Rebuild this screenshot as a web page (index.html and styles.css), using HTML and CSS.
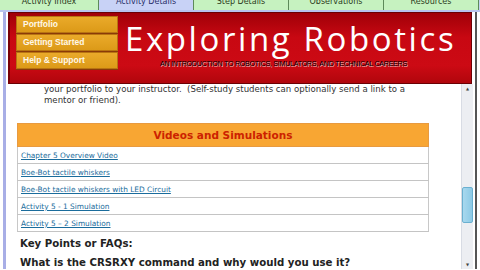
FILE: index.html
```html
<!DOCTYPE html>
<html lang="en">
<head>
    <meta charset="UTF-8">
    <title>Exploring Robotics - Activity Details</title>
    <link rel="stylesheet" href="styles.css">
</head>
<body>

<!-- Вкладки -->
<div class="tabs">
    <div class="tab-link"><span>Activity Index</span></div>
    <div class="tab-link active"><span>Activity Details</span></div>
    <div class="tab-link"><span>Step Details</span></div>
    <div class="tab-link"><span>Observations</span></div>
    <div class="tab-link"><span>Resources</span></div>
</div>

<div class="frame">
    <div class="banner">
        <div class="menu">
            <div class="menu-item">Portfolio</div>
            <div class="menu-item">Getting Started</div>
            <div class="menu-item">Help &amp; Support</div>
        </div>
        <div class="title">
            <div class="big">Exploring Robotics</div>
            <div class="sub">AN INTRODUCTION TO ROBOTICS, SIMULATORS, AND TECHNICAL CAREERS</div>
        </div>
    </div>

    <div class="view">
        <div class="content">
            <p class="intro">your portfolio to your instructor.&nbsp; (Self-study students can optionally send a link to a<br>mentor or friend).</p>

            <table class="videos">
                <tr><th>Videos and Simulations</th></tr>
                <tr><td><a href="#">Chapter 5 Overview Video</a></td></tr>
                <tr><td><a href="#">Boe-Bot tactile whiskers</a></td></tr>
                <tr><td><a href="#">Boe-Bot tactile whiskers with LED Circuit</a></td></tr>
                <tr><td><a href="#">Activity 5 - 1 Simulation</a></td></tr>
                <tr><td><a href="#">Activity 5 &ndash; 2 Simulation</a></td></tr>
            </table>

            <h3>Key Points or FAQs:</h3>
            <h3>What is the CRSRXY command and why would you use it?</h3>
        </div>
        <div class="scrollbar">
            <div class="arrow">&#9650;</div>
            <div class="track"><div class="thumb"></div></div>
            <div class="arrow">&#9660;</div>
        </div>
    </div>
</div>

</body>
</html>
```

FILE: styles.css
```css
body {
    margin: 0;
    background: #fff;
    font-family: "DejaVu Sans", Verdana, sans-serif;
    width: 480px;
    height: 270px;
    overflow: hidden;
}

/* Вкладки */
.tabs {
    display: flex;
    height: 10px;
    overflow: hidden;
    background: #c4d0f0;
    border-bottom: 2px solid #b8c4ee;
}
.tab-link {
    width: 94px;
    background: #c6f2c0;
    border-right: 1px solid #5d8a5a;
    text-align: center;
    font-size: 8px;
    color: #2a3a20;
}
.tab-link:first-child {
    width: 98px;
}
.tab-link.active {
    background: #c8d2f6;
    color: #28306a;
}
.tab-link span {
    display: block;
    margin-top: -3px;
}

.frame {
    border-left: 3px solid #a8aee6;
    margin-left: 3px;
    padding-left: 2px;
    border-right: 2px solid #555;
    margin-right: 3px;
}

/* Шапка */
.banner {
    display: flex;
    height: 70px;
    margin-right: 3px;
    background: linear-gradient(#a00008, #c80812 35%, #cc0a14 75%, #b0060c);
    border: 1px solid #6a0004;
    border-left: 2px solid #7a0006;
}
.menu {
    width: 102px;
    margin: 3px 0 0 6px;
    display: flex;
    flex-direction: column;
    gap: 1px;
}
.menu-item {
    height: 15px;
    line-height: 15px;
    padding-left: 6px;
    background: linear-gradient(#eaaa2a, #dc9a18);
    border: 1px solid #b87412;
    box-shadow: 0 1px 0 #8a3a08;
    font-family: "Liberation Sans", Arial, sans-serif;
    font-weight: bold;
    font-size: 8.5px;
    color: #fff8e8;
}
.title {
    margin-left: 7px;
    color: #fff;
}
.big {
    font-family: "Open Sans", sans-serif;
    font-size: 33px;
    letter-spacing: 2.6px;
    line-height: 34px;
    margin-top: 9px;
}
.sub {
    font-family: "Liberation Sans", Arial, sans-serif;
    font-size: 7px;
    letter-spacing: -0.2px;
    color: #000;
    margin: 4px 0 0 35px;
    text-shadow: 1px 1px 0 rgba(255, 255, 255, 0.7);
}

/* Область прокрутки */
.view {
    display: flex;
    height: 185px;
}
.content {
    flex: 1;
    padding-left: 9px;
}
.intro {
    margin: 0 0 0 27px;
    font-size: 8.6px;
    line-height: 11px;
    color: #333;
}
.videos {
    width: 412px;
    margin-top: 17px;
    border-collapse: collapse;
    border: 1px solid #c8c8c8;
}
.videos th {
    height: 22px;
    padding: 0;
    background: #f8a633;
    border: 1px solid #e89a40;
    color: #cc2200;
    font-size: 10.5px;
    font-weight: bold;
}
.videos td {
    height: 16px;
    padding: 0 0 0 3px;
    border-bottom: 1px solid #c4c4c4;
    font-size: 7.4px;
}
.videos a {
    color: #1a6c9c;
}
h3 {
    margin: 6px 0 0 3px;
    font-size: 10.2px;
    color: #222;
}
h3 + h3 {
    margin-top: 8px;
}

.scrollbar {
    width: 11px;
    margin-right: 2px;
    display: flex;
    flex-direction: column;
    background: #eceef2;
    border-left: 1px solid #d8dce4;
}
.arrow {
    height: 9px;
    font-size: 4px;
    line-height: 9px;
    text-align: center;
    color: #444;
}
.track {
    flex: 1;
    padding-top: 94px;
}
.thumb {
    height: 34px;
    background: linear-gradient(90deg, #a8d8ee, #8ccae6);
    border: 1px solid #6ab0d0;
    border-radius: 2px;
}
```
